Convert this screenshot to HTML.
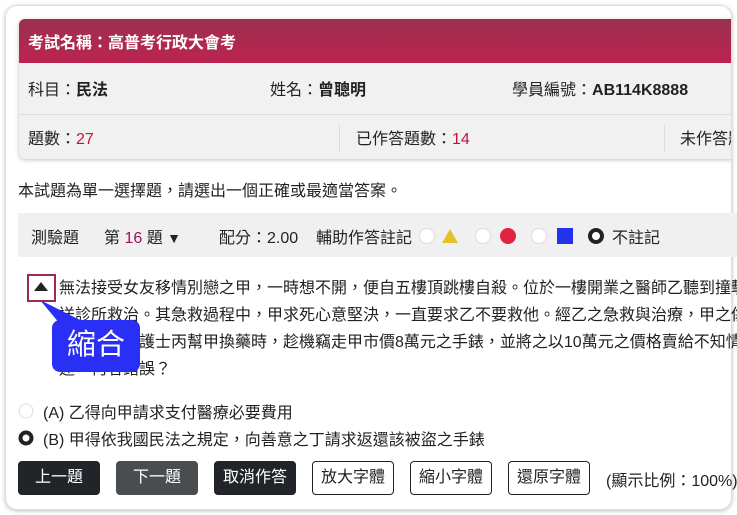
<!DOCTYPE html>
<html><head><meta charset="utf-8"><style>
*{box-sizing:border-box;margin:0;padding:0}
body{width:737px;height:515px;overflow:hidden;background:#fff;font-family:"Liberation Sans","Noto Sans CJK TC",sans-serif;color:#222;font-size:16px;position:relative}
.outer{position:absolute;left:5px;top:5px;width:727px;height:505px;border:1px solid #ddd;border-radius:12px;box-shadow:0 1px 4px rgba(0,0,0,.25);overflow:hidden}
.card{position:absolute;left:13px;top:13px;width:740px;height:140px;border-radius:6px;background:#f1f1f1;box-shadow:0 1px 4px rgba(0,0,0,.25);overflow:hidden}
.hd{height:44px;background:linear-gradient(#9a3050,#bd2350);color:#fff;font-size:16px;font-weight:bold;padding:10px 0 0 9px}
.r1{height:52px;border-bottom:1px solid #dcdce4;position:relative}
.r1 span,.r2 span{position:absolute;top:13px;font-size:16px;white-space:nowrap}
.r2{position:relative;height:44px}
.r2 span{top:10px}
.red{color:#c0143c}
.sep{position:absolute;top:9px;width:1px;height:28px;background:#ddd}
.t{position:absolute;white-space:nowrap}
.bar{position:absolute;left:18px;top:213px;width:720px;height:44px;background:#f0f0f0}
.q{position:absolute;left:59px;font-size:16px;white-space:nowrap}
.btn{position:absolute;top:461px;height:34px;border-radius:4px;font-size:16px;text-align:center;line-height:32px;border:1px solid #222}
.dk{background:#212529;color:#fff}
.ol{background:#fff;color:#222}
</style></head><body>
<div class="outer">
<div class="card">
<div class="hd">考試名稱：高普考行政大會考</div>
<div class="r1"><span style="left:9px">科目：<b>民法</b></span><span style="left:251px">姓名：<b>曾聰明</b></span><span style="left:493px">學員編號：<b>AB114K8888</b></span></div>
<div class="r2"><span style="left:9px">題數：<span class="red" style="position:static">27</span></span><div class="sep" style="left:320px"></div><span style="left:337px">已作答題數：<span class="red" style="position:static">14</span></span><div class="sep" style="left:645px"></div><span style="left:661px">未作答題數</span></div>
</div>
</div>
<div class="t" style="left:18px;top:177px;font-size:16px">本試題為單一選擇題，請選出一個正確或最適當答案。</div>
<div class="bar">
<span class="t" style="left:13px;top:11px">測驗題</span>
<span class="t" style="left:86px;top:11px">第 <span style="color:#a0105a">16</span> 題 <span style="font-size:14px">▼</span></span>
<span class="t" style="left:201px;top:11px">配分：2.00</span>
<span class="t" style="left:298px;top:11px">輔助作答註記</span>
<svg style="position:absolute;left:401px;top:14px" width="320" height="18">
<circle cx="8" cy="9" r="7.5" fill="#fff" stroke="#ddd"/>
<polygon points="31,2 39,16 23,16" fill="#e6c02b"/>
<circle cx="64" cy="9" r="7.5" fill="#fff" stroke="#ddd"/>
<circle cx="89" cy="9" r="8" fill="#e0233f"/>
<circle cx="120" cy="9" r="7.5" fill="#fff" stroke="#ddd"/>
<rect x="138" y="1" width="16" height="16" fill="#2233ee"/>
<circle cx="177" cy="9" r="6" fill="#fff" stroke="#222" stroke-width="4"/>
</svg>
<span class="t" style="left:594px;top:11px">不註記</span>
</div>
<div style="position:absolute;left:27px;top:274px;width:29px;height:28px;border:2px solid #a3284a;background:#fff"></div>
<svg style="position:absolute;left:34px;top:282px" width="16" height="10"><polygon points="7,0 14,9 0,9" fill="#222"/></svg>
<div class="q" style="top:274px">無法接受女友移情別戀之甲，一時想不開，便自五樓頂跳樓自殺。位於一樓開業之醫師乙聽到撞擊聲</div>
<div class="q" style="top:301px">送診所救治。其急救過程中，甲求死心意堅決，一直要求乙不要救他。經乙之急救與治療，甲之傷</div>
<div class="q" style="top:328px">期間，乙之護士丙幫甲換藥時，趁機竊走甲市價8萬元之手錶，並將之以10萬元之價格賣給不知情</div>
<div class="q" style="top:355px">述，何者錯誤？</div>
<svg style="position:absolute;left:40px;top:298px" width="50" height="30"><polygon points="0,2 20,26 48,26" fill="#2a2ff5"/></svg>
<div style="position:absolute;left:52px;top:320px;width:88px;height:52px;background:#2a2ff5;border-radius:8px;color:#fff;font-size:29px;line-height:50px;text-align:center">縮合</div>
<svg style="position:absolute;left:18px;top:402px" width="18" height="45"><circle cx="8" cy="9" r="7" fill="#fff" stroke="#ddd"/><circle cx="8" cy="36" r="5.5" fill="#fff" stroke="#222" stroke-width="4"/></svg>
<div class="t" style="left:43px;top:399px">(A) 乙得向甲請求支付醫療必要費用</div>
<div class="t" style="left:43px;top:426px">(B) 甲得依我國民法之規定，向善意之丁請求返還該被盜之手錶</div>
<div class="btn dk" style="left:18px;width:82px">上一題</div>
<div class="btn" style="left:116px;width:82px;background:#4a4d50;color:#fff;border-color:#4a4d50">下一題</div>
<div class="btn dk" style="left:214px;width:82px">取消作答</div>
<div class="btn ol" style="left:312px;width:82px">放大字體</div>
<div class="btn ol" style="left:410px;width:82px">縮小字體</div>
<div class="btn ol" style="left:508px;width:82px">還原字體</div>
<div class="t" style="left:606px;top:467px">(顯示比例：100%)</div>
</body></html>
